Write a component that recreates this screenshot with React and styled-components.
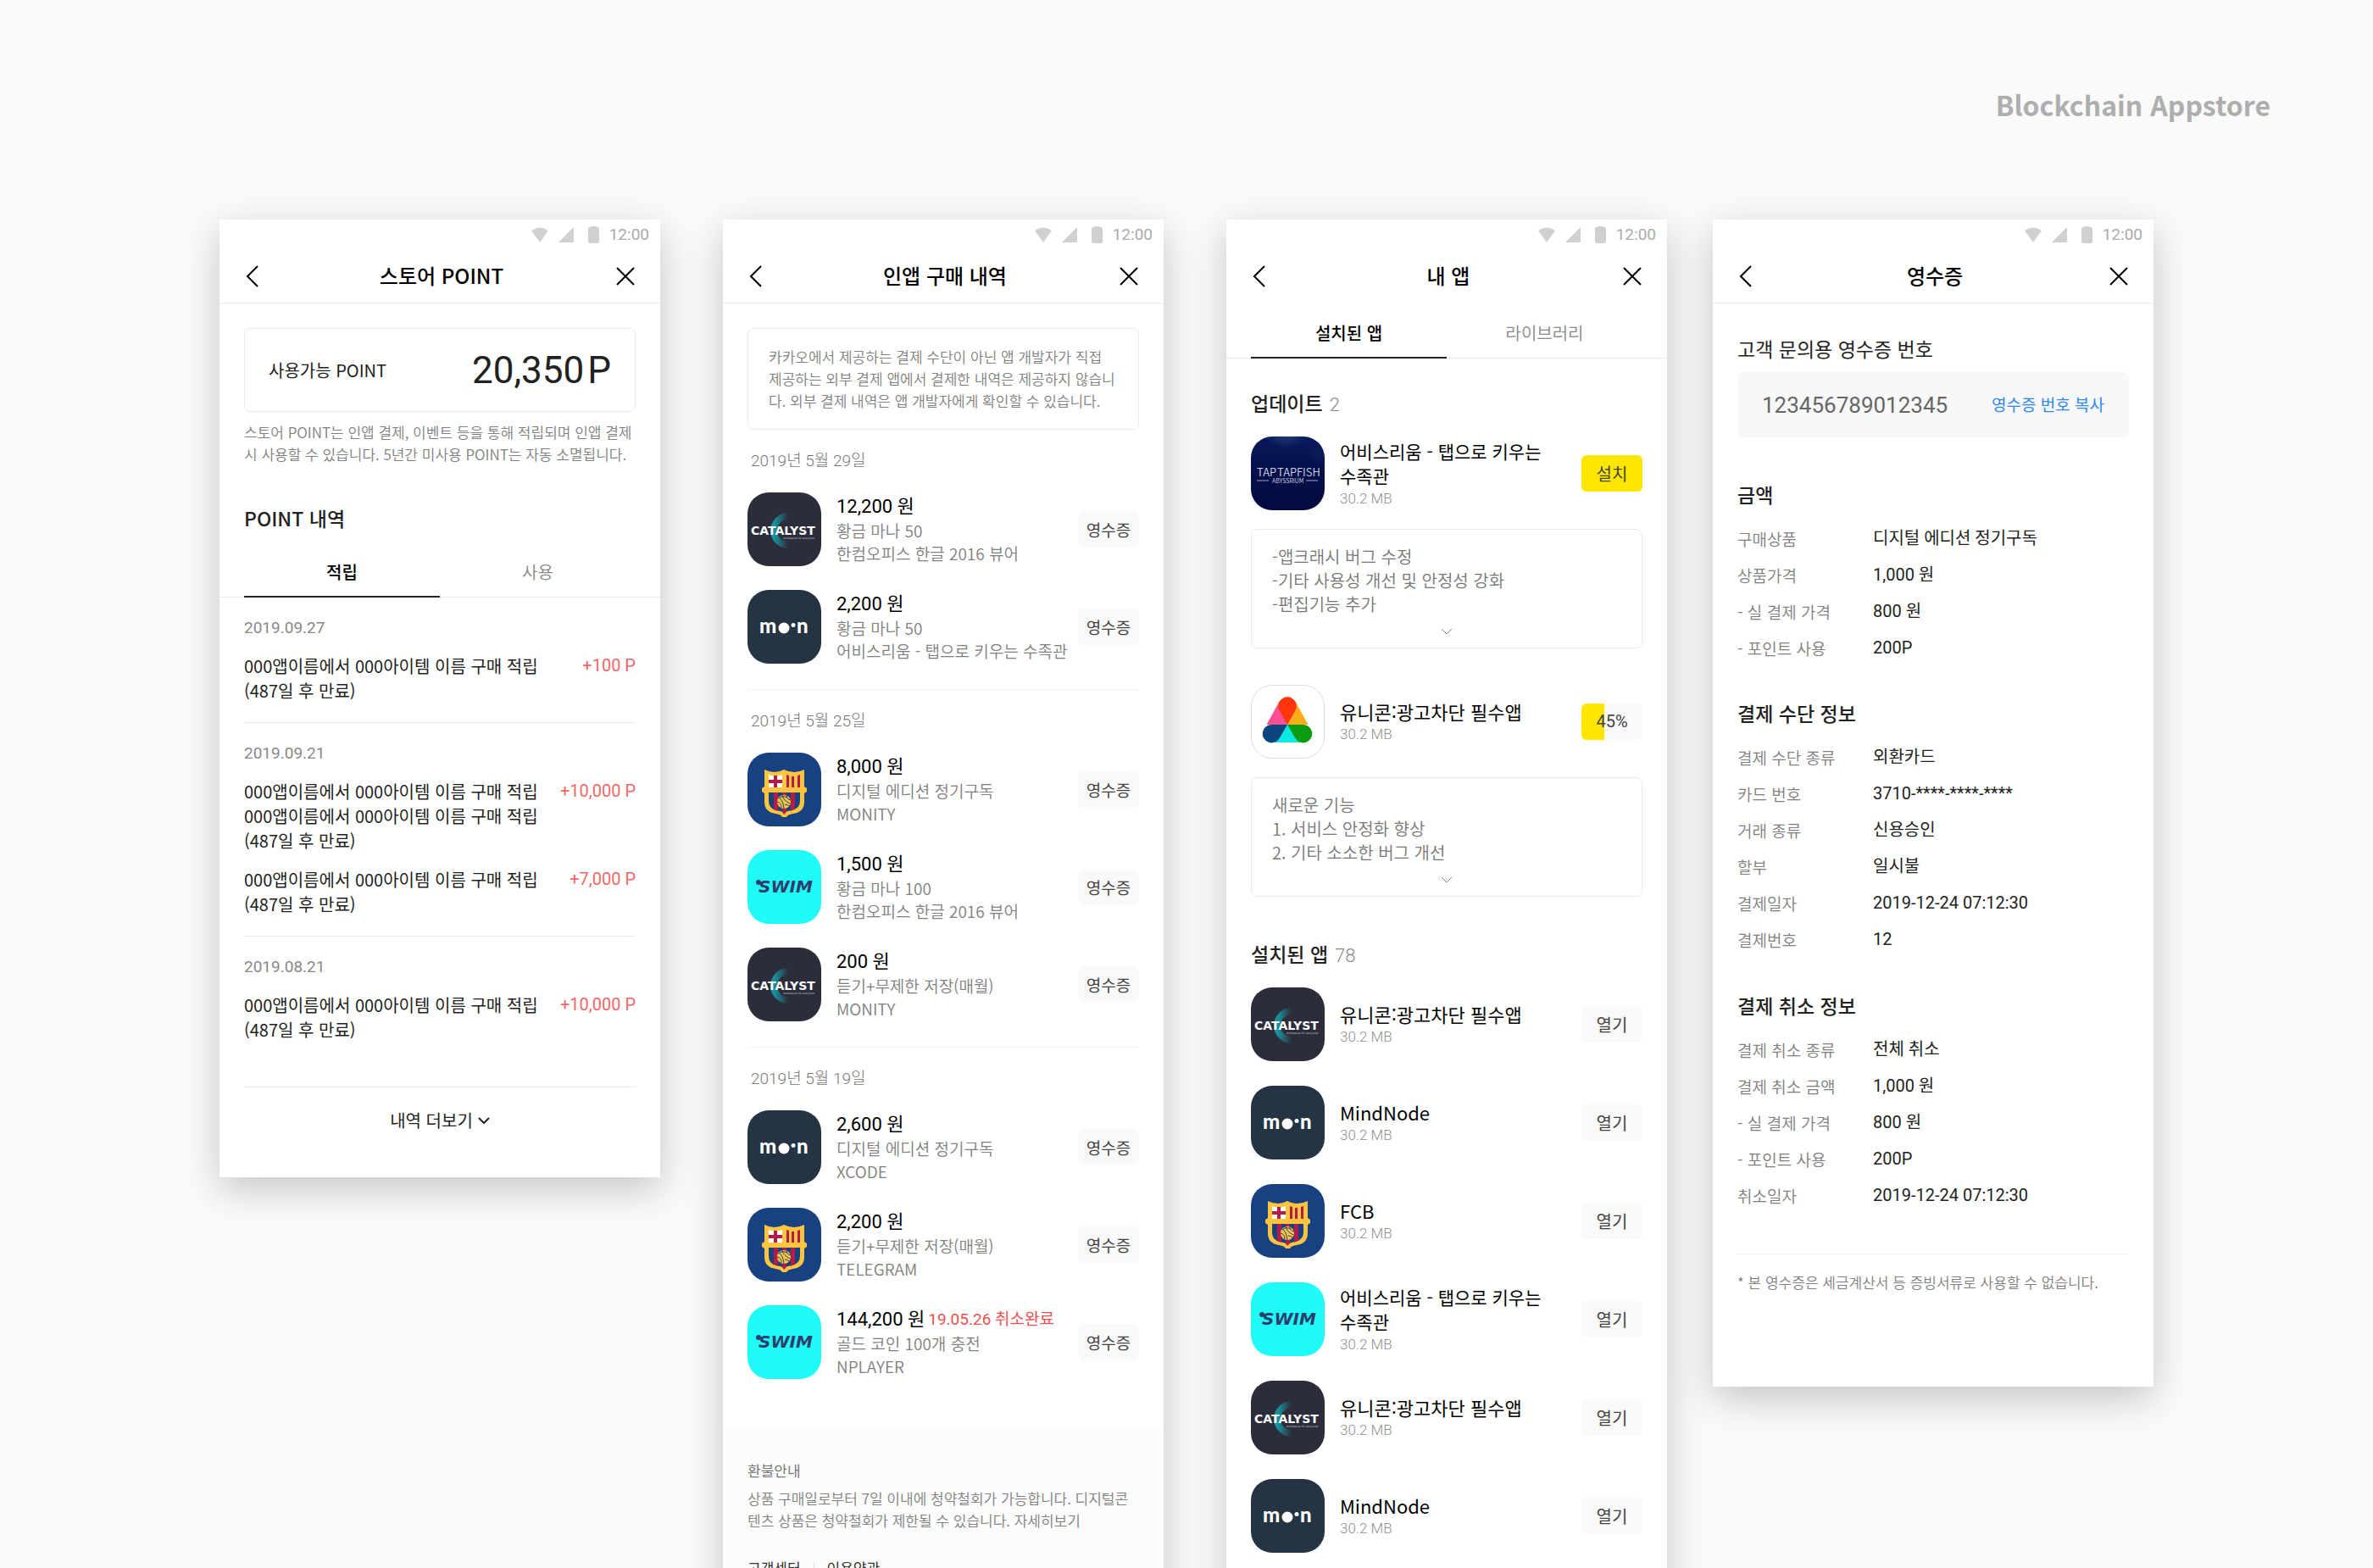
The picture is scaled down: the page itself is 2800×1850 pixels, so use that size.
import React from "react";
import styled, { createGlobalStyle } from "styled-components";

const KR = `"Noto Sans CJK KR", sans-serif`;
const NUM = `Roboto, "Noto Sans CJK KR", sans-serif`;

const GlobalStyle = createGlobalStyle`
  *, *::before, *::after { box-sizing: border-box; }
  body { margin: 0; background: #fafafa; }
  h1, h2, h3, p, ul, dl, dd { margin: 0; padding: 0; font-weight: inherit; }
  ul { list-style: none; }
  button {
    margin: 0;
    padding: 0;
    border: 0;
    background: none;
    color: inherit;
    font: inherit;
    cursor: pointer;
  }
  a { color: inherit; text-decoration: none; }
  svg { display: block; flex: none; }
`;

/* ---------- board ---------- */

const Page = styled.main`
  height: 100vh;
  overflow: hidden;
  background: #fafafa;
  color: #222;
  font-family: ${KR};
`;

const Masthead = styled.header`
  display: flex;
  justify-content: flex-end;
  padding: 98px 121px 111px;
`;

const BoardTitle = styled.h1`
  font-size: 32px;
  line-height: 50px;
  font-weight: 700;
  color: #aeaeae;
`;

const Board = styled.div`
  display: flex;
  align-items: flex-start;
  padding: 0 259px;
`;

const Phone = styled.section`
  flex: 1 1 0;
  min-width: 0;
  margin-left: ${(p) => p.$gap || 0}px;
  padding-bottom: ${(p) => p.$end || 0}px;
  background: #fff;
  box-shadow: 0 14px 43px rgba(0, 0, 0, 0.21);
`;

/* ---------- phone chrome ---------- */

const StatusBar = styled.div`
  display: flex;
  align-items: center;
  justify-content: flex-end;
  gap: 12px;
  height: 36px;
  padding-right: 13px;
  color: #aaa;
  font-family: ${NUM};
  font-size: 19px;
  line-height: 36px;
`;

const NavBar = styled.header`
  display: flex;
  align-items: center;
  justify-content: space-between;
  height: 63px;
  padding: 0 30px;
  border-bottom: 1px solid ${(p) => (p.$plain ? "transparent" : "#ececec")};
`;

const NavTitle = styled.h2`
  padding-bottom: 2px;
  font-size: 24px;
  line-height: 36px;
  font-weight: 500;
  color: #000;
`;

const NavButton = styled.button`
  display: flex;
  width: ${(p) => p.$width}px;
`;

const Body = styled.div`
  padding: ${(p) => p.$top}px 29px 0;
`;

const TabList = styled.div`
  display: flex;
  padding: 0 29px;
  border-bottom: 1px solid #ececec;
`;

const Tab = styled.button`
  flex: 1;
  margin-bottom: -1px;
  padding: 20px 0 14px;
  border-bottom: 2px solid ${(p) => (p.$active ? "#222" : "transparent")};
  font-size: 20px;
  line-height: 29px;
  font-weight: ${(p) => (p.$active ? 500 : 350)};
  color: ${(p) => (p.$active ? "#000" : "#888")};
`;

const SectionTitle = styled.h3`
  margin-top: ${(p) => p.$before || 0}px;
  margin-bottom: ${(p) => p.$after || 0}px;
  font-size: 23px;
  line-height: 30px;
  font-weight: ${(p) => (p.$light ? 400 : 500)};
  color: #222;
`;

const Count = styled.span`
  margin-left: 8px;
  font-family: ${NUM};
  font-size: 22px;
  line-height: 22px;
  font-weight: 300;
  color: #888;
`;

const SmallText = styled.p`
  font-size: 17px;
  line-height: 26px;
  font-weight: 350;
  color: #808080;
`;

/* ---------- points ---------- */

const Balance = styled.div`
  display: flex;
  align-items: center;
  justify-content: space-between;
  height: 99px;
  margin-bottom: 11px;
  padding: 0 28px;
  border: 1px solid #ebebeb;
  border-radius: 7px;
  font-size: 20px;
`;

const BalanceValue = styled.strong`
  display: flex;
  gap: 4px;
  font-family: ${NUM};
  font-size: 44px;
  font-weight: 400;
`;

const PointTabs = styled(TabList)`
  margin: 0 -29px;
`;

const PointGroup = styled.section`
  display: flex;
  flex-direction: column;
  padding: 25px 0 ${(p) => (p.$last ? 53 : 23)}px;
  border-bottom: 1px solid #ececec;
`;

const PointDate = styled.time`
  margin-bottom: 19px;
  font-family: ${NUM};
  font-size: 19px;
  line-height: 22px;
  color: #888;
`;

const PointRows = styled.ul`
  display: flex;
  flex-direction: column;
  gap: 17px;
`;

const PointRow = styled.li`
  display: flex;
  justify-content: space-between;
  font-size: 20px;
  line-height: 29px;
`;

const PointAmount = styled.span`
  font-family: ${NUM};
  color: #f26666;
`;

const MoreButton = styled.button`
  display: flex;
  align-items: center;
  justify-content: center;
  gap: 6px;
  width: 100%;
  padding: 24px 0;
  font-size: 20px;
  line-height: 29px;
`;

/* ---------- purchases and apps ---------- */

const NoticeBox = styled.div`
  padding: 20px 24px;
  border: 1px solid #ebebeb;
  border-radius: 7px;
`;

const DayGroup = styled.section`
  padding: 24px 0 ${(p) => (p.$last ? 58 : 30)}px;
  border-bottom: ${(p) => (p.$last ? 0 : 1)}px solid #f2f2f2;
`;

const DayTitle = styled.h3`
  margin-bottom: 24px;
  padding-left: 4px;
  font-family: ${NUM};
  font-size: 19px;
  line-height: 26px;
  font-weight: 300;
  color: #777;
`;

const RowList = styled.ul`
  display: flex;
  flex-direction: column;
  gap: ${(p) => p.$gap}px;
`;

const Row = styled.li`
  display: flex;
  align-items: center;
  gap: 18px;
  height: 87px;
`;

const RowText = styled.div`
  flex: 1;
  min-width: 0;
  white-space: nowrap;
`;

const Price = styled.p`
  display: flex;
  gap: 4px;
  font-family: ${NUM};
  font-size: 22px;
  line-height: 29px;
  color: #000;
`;

const Cancelled = styled.span`
  font-size: 19px;
  color: #ee4f4f;
`;

const Detail = styled.p`
  font-size: 19px;
  line-height: 27px;
  font-weight: 350;
  color: #808080;
`;

const AppName = styled.p`
  font-size: ${(p) => (p.$wrapped ? 21 : 22)}px;
  line-height: 29px;
  color: #000;
`;

const AppSize = styled.p`
  font-family: ${NUM};
  font-size: 17px;
  line-height: 24px;
  font-weight: 300;
  color: #909090;
`;

const ActionButton = styled.button`
  flex: none;
  width: 72px;
  height: 43px;
  border-radius: 6px;
  background: ${(p) => (p.$primary ? "#ffe600" : "#f9f9f9")};
  font-family: ${(p) => (p.$numeric ? NUM : KR)};
  font-size: ${(p) => (p.$compact ? 19 : 20)}px;
  line-height: 43px;
  color: #444;
`;

const ProgressButton = styled(ActionButton)`
  background: linear-gradient(90deg, #ffe600 27px, #f9f9f9 27px);
`;

const ReleaseNote = styled.div`
  margin: 22px 0 ${(p) => p.$after || 0}px;
  padding: 18px 24px 15px;
  border: 1px solid #ebebeb;
  border-radius: 7px;
  font-size: 20px;
  line-height: 28px;
  font-weight: 350;
  color: #777;
`;

const ExpandButton = styled.button`
  display: flex;
  justify-content: center;
  width: 100%;
  margin-top: 14px;
  color: #888;
`;

const Refund = styled.footer`
  padding: 37px 29px 60px;
  background: #fcfcfc;
`;

const RefundTitle = styled.h3`
  margin-bottom: 7px;
  font-size: 17px;
  line-height: 26px;
  color: #777;
`;

const FooterLinks = styled.nav`
  display: flex;
  align-items: center;
  gap: 15px;
  margin-top: 30px;
  font-size: 17px;
  line-height: 26px;
  color: #333;
`;

const LinkDivider = styled.span`
  width: 1px;
  height: 14px;
  background: #e4e4e4;
`;

/* ---------- receipt ---------- */

const ReceiptNumber = styled.div`
  display: flex;
  align-items: center;
  justify-content: space-between;
  height: 77px;
  margin-top: 13px;
  padding: 0 29px;
  border-radius: 7px;
  background: #f8f8f8;
  font-family: ${NUM};
  font-size: 26px;
  color: #666;
`;

const CopyButton = styled.button`
  padding-bottom: 2px;
  font-family: ${KR};
  font-size: 19px;
  color: #2f88ea;
`;

const Facts = styled.dl`
  display: grid;
  grid-template-columns: 160px 1fr;
  row-gap: 14px;
  line-height: 29px;
`;

const FactLabel = styled.dt`
  font-size: 19px;
  font-weight: 350;
  color: #808080;
`;

const FactValue = styled.dd`
  font-family: ${NUM};
  font-size: 20px;
  color: #222;
`;

const Disclaimer = styled(SmallText)`
  margin-top: 54px;
  padding-top: 20px;
  border-top: 1px solid #f0f0f0;
`;

/* ---------- drawings ---------- */

const WifiIcon = () => (
  <svg width="20" height="18" viewBox="0 0 20 18" fill="#d0d0d0" aria-hidden="true">
    <path d="M0 4 Q10 -3 20 4 L10 18 Z" />
  </svg>
);

const SignalIcon = () => (
  <svg width="18" height="18" viewBox="0 0 18 18" fill="#d0d0d0" aria-hidden="true">
    <path d="M18 0 V18 H0 Z" />
  </svg>
);

const BatteryIcon = () => (
  <svg width="18" height="20" viewBox="0 0 18 20" fill="#d0d0d0" aria-hidden="true">
    <path d="M8 1 Q8 0 9 0 H14 Q15 0 15 1 H16 Q18 1 18 3 V18 Q18 20 16 20 H7 Q5 20 5 18 V3 Q5 1 7 1 Z" />
  </svg>
);

const BackIcon = () => (
  <svg width="17" height="26" viewBox="0 0 17 26" fill="none" stroke="#000" strokeWidth="2" aria-hidden="true">
    <path d="M15 1 L3 13 L15 25" />
  </svg>
);

const CloseIcon = () => (
  <svg width="22" height="22" viewBox="0 0 22 22" fill="none" stroke="#000" strokeWidth="2" aria-hidden="true">
    <path d="M1 1 L21 21 M21 1 L1 21" />
  </svg>
);

const ChevronIcon = ({ weight = 1 }) => (
  <svg width="14" height="8" viewBox="0 0 14 8" fill="none" stroke="currentColor" strokeWidth={weight} aria-hidden="true">
    <path d="M1 1 L7 7 L13 1" />
  </svg>
);

const Tile = styled.svg.attrs({ viewBox: "0 0 87 87", "aria-hidden": true })`
  width: 87px;
  height: 87px;
  border-radius: 25px;
  background: ${(p) => p.$fill};
`;

const CatalystTile = () => (
  <Tile $fill="#2c2d3b">
    <defs>
      <linearGradient id="crescent" x1="23" x2="48" y1="0" y2="0" gradientUnits="userSpaceOnUse">
        <stop offset="0" stopColor="#17a6b0" />
        <stop offset="0.4" stopColor="#1a8a95" />
        <stop offset="1" stopColor="#2c2d3b" />
      </linearGradient>
    </defs>
    <path d="M48 24 A21 21 0 0 0 48 66 L48 58 A13 13 0 0 1 48 32 Z" fill="url(#crescent)" />
    <text x="4" y="50" fill="#fff" fontFamily="DejaVu Sans" fontWeight="700" fontSize="14">CATALYST</text>
    <text x="42" y="55" fill="#c4c6cf" fontFamily="DejaVu Sans" fontSize="3">workplaces for everyone</text>
  </Tile>
);

const MoonTile = () => (
  <Tile $fill="#243442">
    <g fill="#fff" fontFamily="Lato" fontWeight="900" fontSize="24">
      <text x="14" y="51">m</text>
      <circle cx="43" cy="45" r="6.5" />
      <circle cx="54" cy="41.5" r="2.5" />
      <text x="58" y="51">n</text>
    </g>
  </Tile>
);

const BarcaTile = () => (
  <Tile $fill="#174181">
    <path
      d="M20 20 Q32 26 43 20 Q55 26 67 20 V40 L70 42 V46 L67 48 V58 Q67 70 54 72 Q47 73 46 76 H41 Q40 73 33 72 Q20 70 20 58 V48 L17 46 V42 L20 40 Z"
      fill="#fbc540"
    />
    <path d="M25 26 Q33 29 41 26 V41 H25 Z" fill="#fff" />
    <path d="M31 27 H35 V41 H31 Z M25 32 H41 V36 H25 Z" fill="#b31b48" />
    <path d="M46 26 L49 27 V41 H46 Z M52 28 H55 V41 H52 Z M59 27 L62 26 V41 H59 Z" fill="#b31b48" />
    <path d="M25 47 H62 V57 Q62 66 52 68 Q46 69 43 71 Q40 69 34 68 Q25 66 25 57 Z" fill="#174181" />
    <path d="M31 47 H36 V69 L31 67 Z M41 47 H46 V70 L43 73 L41 70 Z M51 47 H56 V66 L51 69 Z" fill="#b31b48" />
    <circle cx="43" cy="58" r="8" fill="#fbc540" />
    <path
      d="M37 53 Q42 56 43 66 M41 50 Q42 56 50 60 M46 50 Q46 55 51 56 M35 58 Q40 59 40 65 M44 61 Q47 61 49 63 M37 54 Q41 50 47 53"
      fill="none"
      stroke="#174181"
      strokeWidth="1"
    />
  </Tile>
);

const SwimTile = () => (
  <Tile $fill="#1ffbf7">
    <circle cx="13" cy="38" r="3" fill="#2f3d6c" />
    <text x="13" y="50" fill="#2f3d6c" fontFamily="DejaVu Sans" fontStyle="italic" fontWeight="700" fontSize="20">SWIM</text>
  </Tile>
);

const FishTile = () => (
  <Tile $fill="linear-gradient(#08195a, #04104c 45%, #030a3e)">
    <defs>
      <radialGradient id="glow" cx="0.5" cy="0.5" r="0.5">
        <stop offset="0" stopColor="#47649b" stopOpacity="0.4" />
        <stop offset="1" stopColor="#47649b" stopOpacity="0" />
      </radialGradient>
    </defs>
    <ellipse cx="42" cy="0" rx="26" ry="14" fill="url(#glow)" />
    <ellipse cx="80" cy="20" rx="14" ry="12" fill="url(#glow)" opacity="0.3" />
    <g fill="#d2d5e2" fontFamily="Noto Sans CJK KR" fontWeight="350">
      <text x="7" y="47" fontSize="13">TAP</text>
      <text x="31" y="47" fontSize="13">TAP</text>
      <text x="54" y="47" fontSize="13">FISH</text>
      <text x="25" y="55" fontSize="7">ABYSSRIUM</text>
    </g>
    <path d="M7 52 H21 M65 52 H79" stroke="#9fa4bf" strokeWidth="1" />
  </Tile>
);

const OutlinedTile = styled(Tile)`
  border: 1px solid #dcdcdc;
`;

const UnicornTile = () => (
  <OutlinedTile $fill="#fff">
    <path d="M33.4 19 L17.9 47 H43 Z" fill="#ff4f93" />
    <path d="M52.6 19 L68.1 47 H43 Z" fill="#ffad16" />
    <path d="M43 47 L24.5 68.7 H61.5 Z" fill="#0fe9e6" />
    <path d="M43 47 L33.4 29.9 A11 11 0 1 1 52.6 29.9 Z" fill="#ff360b" />
    <path d="M43 47 H24.5 A11 11 0 1 0 33.8 63 Z" fill="#0b4580" />
    <path d="M43 47 H61.5 A11 11 0 1 1 52.2 63 Z" fill="#0c9c14" />
  </OutlinedTile>
);

const TILES = {
  catalyst: CatalystTile,
  moon: MoonTile,
  barca: BarcaTile,
  swim: SwimTile,
  fish: FishTile,
  unicorn: UnicornTile,
};

/* ---------- data ---------- */

const POINT_GROUPS = [
  {
    date: "2019.09.27",
    rows: [{ lines: ["000앱이름에서 000아이템 이름 구매 적립", "(487일 후 만료)"], amount: "+100 P" }],
  },
  {
    date: "2019.09.21",
    rows: [
      {
        lines: ["000앱이름에서 000아이템 이름 구매 적립", "000앱이름에서 000아이템 이름 구매 적립", "(487일 후 만료)"],
        amount: "+10,000 P",
      },
      { lines: ["000앱이름에서 000아이템 이름 구매 적립", "(487일 후 만료)"], amount: "+7,000 P" },
    ],
  },
  {
    date: "2019.08.21",
    rows: [{ lines: ["000앱이름에서 000아이템 이름 구매 적립", "(487일 후 만료)"], amount: "+10,000 P" }],
  },
];

const PURCHASES = [
  {
    day: "2019년 5월 29일",
    rows: [
      { tile: "catalyst", price: "12,200 원", item: "황금 마나 50", app: "한컴오피스 한글 2016 뷰어" },
      { tile: "moon", price: "2,200 원", item: "황금 마나 50", app: "어비스리움 - 탭으로 키우는 수족관" },
    ],
  },
  {
    day: "2019년 5월 25일",
    rows: [
      { tile: "barca", price: "8,000 원", item: "디지털 에디션 정기구독", app: "MONITY" },
      { tile: "swim", price: "1,500 원", item: "황금 마나 100", app: "한컴오피스 한글 2016 뷰어" },
      { tile: "catalyst", price: "200 원", item: "듣기+무제한 저장(매월)", app: "MONITY" },
    ],
  },
  {
    day: "2019년 5월 19일",
    rows: [
      { tile: "moon", price: "2,600 원", item: "디지털 에디션 정기구독", app: "XCODE" },
      { tile: "barca", price: "2,200 원", item: "듣기+무제한 저장(매월)", app: "TELEGRAM" },
      { tile: "swim", price: "144,200 원", cancelled: "19.05.26 취소완료", item: "골드 코인 100개 충전", app: "NPLAYER" },
    ],
  },
];

const FISH_NAME = ["어비스리움 - 탭으로 키우는", "수족관"];
const UNICORN_NAME = ["유니콘:광고차단 필수앱"];

const INSTALLED = [
  { tile: "catalyst", name: UNICORN_NAME },
  { tile: "moon", name: ["MindNode"] },
  { tile: "barca", name: ["FCB"] },
  { tile: "swim", name: FISH_NAME },
  { tile: "catalyst", name: UNICORN_NAME },
  { tile: "moon", name: ["MindNode"] },
];

const RECEIPT = [
  {
    title: "금액",
    before: 52,
    facts: [
      ["구매상품", "디지털 에디션 정기구독"],
      ["상품가격", "1,000 원"],
      ["- 실 결제 가격", "800 원"],
      ["- 포인트 사용", "200P"],
    ],
  },
  {
    title: "결제 수단 정보",
    before: 47,
    facts: [
      ["결제 수단 종류", "외환카드"],
      ["카드 번호", "3710-****-****-****"],
      ["거래 종류", "신용승인"],
      ["할부", "일시불"],
      ["결제일자", "2019-12-24 07:12:30"],
      ["결제번호", "12"],
    ],
  },
  {
    title: "결제 취소 정보",
    before: 48,
    facts: [
      ["결제 취소 종류", "전체 취소"],
      ["결제 취소 금액", "1,000 원"],
      ["- 실 결제 가격", "800 원"],
      ["- 포인트 사용", "200P"],
      ["취소일자", "2019-12-24 07:12:30"],
    ],
  },
];

/* ---------- screens ---------- */

const Lines = ({ lines }) =>
  lines.map((line, i) => (
    <React.Fragment key={i}>
      {i > 0 && <br />}
      {line}
    </React.Fragment>
  ));

const Chrome = ({ title, plain }) => (
  <>
    <StatusBar>
      <WifiIcon />
      <SignalIcon />
      <BatteryIcon />
      <span>12:00</span>
    </StatusBar>
    <NavBar $plain={plain}>
      <NavButton type="button" $width={26} aria-label="뒤로">
        <BackIcon />
      </NavButton>
      <NavTitle>{title}</NavTitle>
      <NavButton type="button" $width={22} aria-label="닫기">
        <CloseIcon />
      </NavButton>
    </NavBar>
  </>
);

const PointScreen = () => (
  <Phone $end={29}>
    <Chrome title="스토어 POINT" />
    <Body $top={29}>
      <Balance>
        <span>사용가능 POINT</span>
        <BalanceValue>
          <span>20,350</span>
          <span>P</span>
        </BalanceValue>
      </Balance>
      <SmallText>
        <Lines
          lines={[
            "스토어 POINT는 인앱 결제, 이벤트 등을 통해 적립되며 인앱 결제",
            "시 사용할 수 있습니다. 5년간 미사용 POINT는 자동 소멸됩니다.",
          ]}
        />
      </SmallText>
      <SectionTitle $before={47} $after={14}>POINT 내역</SectionTitle>
      <PointTabs role="tablist">
        <Tab type="button" role="tab" aria-selected="true" $active>적립</Tab>
        <Tab type="button" role="tab" aria-selected="false">사용</Tab>
      </PointTabs>
      {POINT_GROUPS.map((group, i) => (
        <PointGroup key={group.date} $last={i === POINT_GROUPS.length - 1}>
          <PointDate>{group.date}</PointDate>
          <PointRows>
            {group.rows.map((row) => (
              <PointRow key={row.amount}>
                <span><Lines lines={row.lines} /></span>
                <PointAmount>{row.amount}</PointAmount>
              </PointRow>
            ))}
          </PointRows>
        </PointGroup>
      ))}
      <MoreButton type="button">
        내역 더보기
        <ChevronIcon weight={2} />
      </MoreButton>
    </Body>
  </Phone>
);

const PurchaseRow = ({ tile, price, cancelled, item, app }) => {
  const Icon = TILES[tile];
  return (
    <Row>
      <Icon />
      <RowText>
        <Price>
          {price}
          {cancelled && <Cancelled>{cancelled}</Cancelled>}
        </Price>
        <Detail>{item}</Detail>
        <Detail>{app}</Detail>
      </RowText>
      <ActionButton type="button" $compact>영수증</ActionButton>
    </Row>
  );
};

const PurchaseScreen = () => (
  <Phone $gap={74}>
    <Chrome title="인앱 구매 내역" />
    <Body $top={29}>
      <NoticeBox>
        <SmallText>
          <Lines
            lines={[
              "카카오에서 제공하는 결제 수단이 아닌 앱 개발자가 직접",
              "제공하는 외부 결제 앱에서 결제한 내역은 제공하지 않습니",
              "다. 외부 결제 내역은 앱 개발자에게 확인할 수 있습니다.",
            ]}
          />
        </SmallText>
      </NoticeBox>
      {PURCHASES.map((group, i) => (
        <DayGroup key={group.day} $last={i === PURCHASES.length - 1}>
          <DayTitle>{group.day}</DayTitle>
          <RowList $gap={28}>
            {group.rows.map((row, n) => (
              <PurchaseRow key={n} {...row} />
            ))}
          </RowList>
        </DayGroup>
      ))}
    </Body>
    <Refund>
      <RefundTitle>환불안내</RefundTitle>
      <SmallText>
        <Lines
          lines={[
            "상품 구매일로부터 7일 이내에 청약철회가 가능합니다. 디지털콘",
            "텐츠 상품은 청약철회가 제한될 수 있습니다. 자세히보기",
          ]}
        />
      </SmallText>
      <FooterLinks>
        <a href="#help">고객센터</a>
        <LinkDivider />
        <a href="#terms">이용약관</a>
      </FooterLinks>
    </Refund>
  </Phone>
);

const AppRow = ({ as, tile, name, children }) => {
  const Icon = TILES[tile];
  return (
    <Row as={as}>
      <Icon />
      <RowText>
        <AppName $wrapped={name.length > 1}><Lines lines={name} /></AppName>
        <AppSize>30.2 MB</AppSize>
      </RowText>
      {children}
    </Row>
  );
};

const AppsScreen = () => (
  <Phone $gap={74} $end={60}>
    <Chrome title="내 앱" plain />
    <TabList role="tablist">
      <Tab type="button" role="tab" aria-selected="true" $active>설치된 앱</Tab>
      <Tab type="button" role="tab" aria-selected="false">라이브러리</Tab>
    </TabList>
    <Body $top={37}>
      <SectionTitle $after={25}>업데이트<Count>2</Count></SectionTitle>
      <AppRow as="div" tile="fish" name={FISH_NAME}>
        <ActionButton type="button" $primary>설치</ActionButton>
      </AppRow>
      <ReleaseNote $after={43}>
        <Lines lines={["-앱크래시 버그 수정", "-기타 사용성 개선 및 안정성 강화", "-편집기능 추가"]} />
        <ExpandButton type="button" aria-label="펼치기"><ChevronIcon /></ExpandButton>
      </ReleaseNote>
      <AppRow as="div" tile="unicorn" name={UNICORN_NAME}>
        <ProgressButton type="button" $numeric>45%</ProgressButton>
      </AppRow>
      <ReleaseNote $after={52}>
        <Lines lines={["새로운 기능", "1. 서비스 안정화 향상", "2. 기타 소소한 버그 개선"]} />
        <ExpandButton type="button" aria-label="펼치기"><ChevronIcon /></ExpandButton>
      </ReleaseNote>
      <SectionTitle $after={25}>설치된 앱<Count>78</Count></SectionTitle>
      <RowList $gap={29}>
        {INSTALLED.map((app, i) => (
          <AppRow key={i} {...app}>
            <ActionButton type="button">열기</ActionButton>
          </AppRow>
        ))}
      </RowList>
    </Body>
  </Phone>
);

const ReceiptScreen = () => (
  <Phone $gap={54} $end={110}>
    <Chrome title="영수증" />
    <Body $top={38}>
      <SectionTitle $light>고객 문의용 영수증 번호</SectionTitle>
      <ReceiptNumber>
        <span>123456789012345</span>
        <CopyButton type="button">영수증 번호 복사</CopyButton>
      </ReceiptNumber>
      {RECEIPT.map((section) => (
        <section key={section.title}>
          <SectionTitle $before={section.before} $after={23}>{section.title}</SectionTitle>
          <Facts>
            {section.facts.map(([label, value]) => (
              <React.Fragment key={label}>
                <FactLabel>{label}</FactLabel>
                <FactValue>{value}</FactValue>
              </React.Fragment>
            ))}
          </Facts>
        </section>
      ))}
      <Disclaimer>* 본 영수증은 세금계산서 등 증빙서류로 사용할 수 없습니다.</Disclaimer>
    </Body>
  </Phone>
);

export default function App() {
  return (
    <>
      <GlobalStyle />
      <Page lang="ko">
        <Masthead>
          <BoardTitle>Blockchain Appstore</BoardTitle>
        </Masthead>
        <Board>
          <PointScreen />
          <PurchaseScreen />
          <AppsScreen />
          <ReceiptScreen />
        </Board>
      </Page>
    </>
  );
}
